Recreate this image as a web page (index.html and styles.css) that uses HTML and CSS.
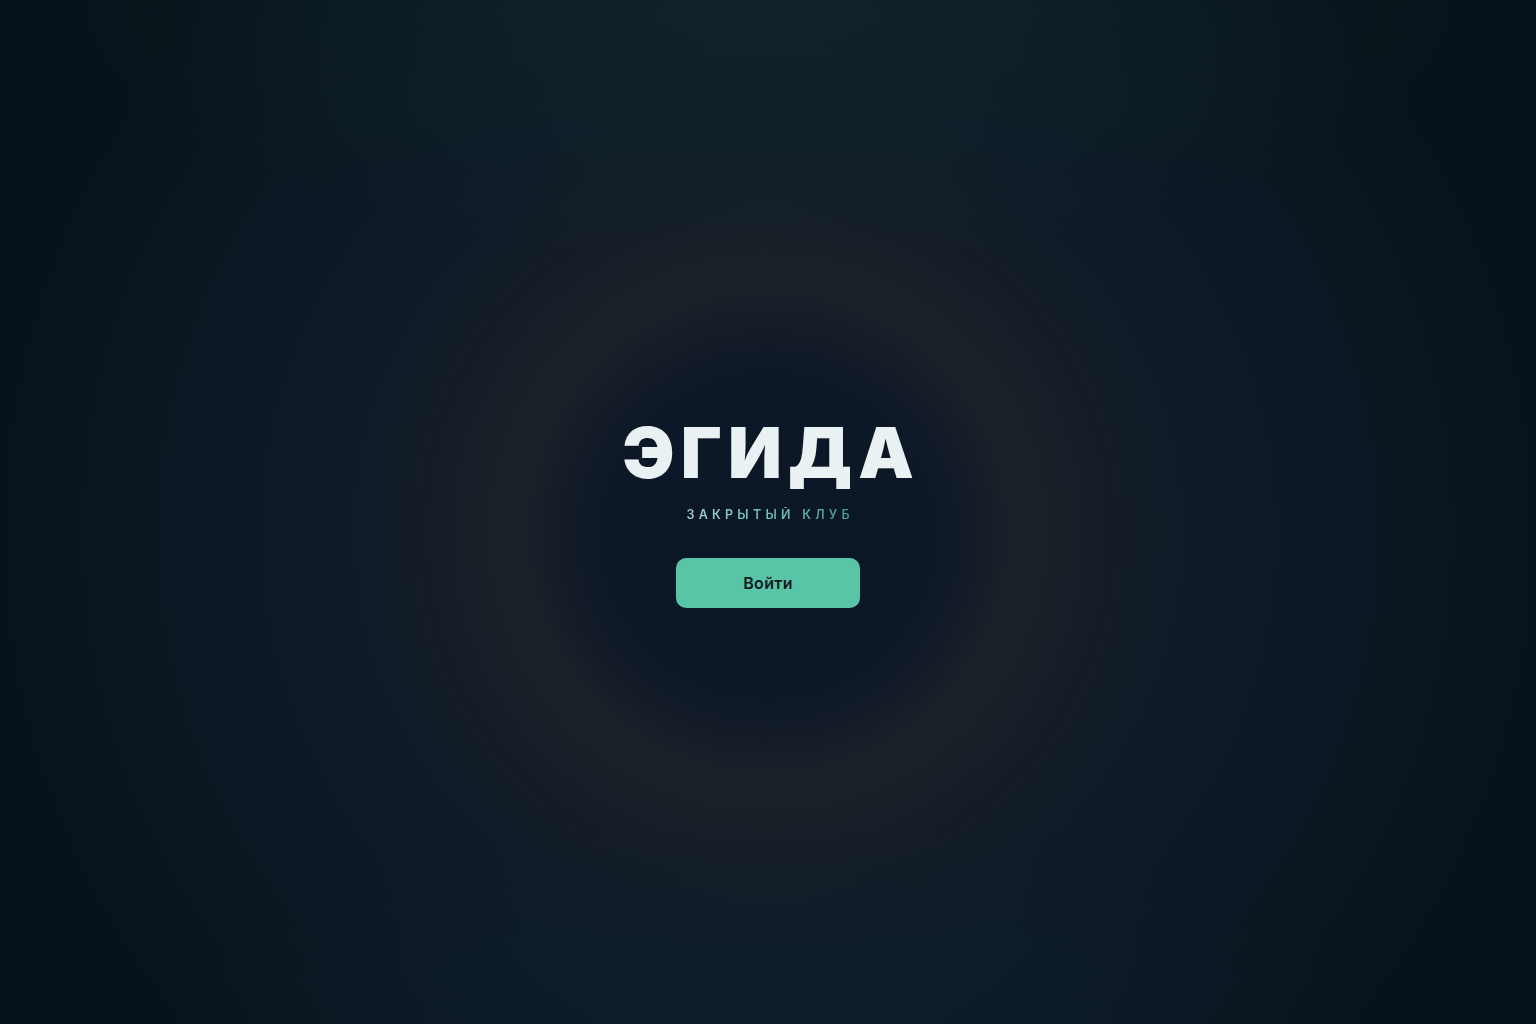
FILE: index.html
```html
<!DOCTYPE html>
<html lang="ru">
<head>
<meta charset="utf-8">
<title>Эгида</title>
<link rel="stylesheet" href="styles.css">
</head>
<body>
<main class="page">
  <section class="hero">
    <h1 class="title">ЭГИДА</h1>
    <p class="subtitle">ЗАКРЫТЫЙ КЛУБ</p>
    <button class="enter" type="button">Войти</button>
  </section>
</main>
</body>
</html>
```
FILE: styles.css
```css
* { box-sizing: border-box; }
html, body { margin: 0; height: 100%; }
body {
  font-family: Inter, "Noto Sans", "DejaVu Sans", sans-serif;
  background-color: #0a141e;
}
.page {
  min-height: 100vh;
  display: flex;
  align-items: center;
  justify-content: center;
  background:
    radial-gradient(ellipse 230px 210px at 50% 53%, rgba(11,22,38,0.9) 0%, rgba(11,22,38,0.6) 60%, rgba(11,22,38,0) 100%),
    radial-gradient(circle at 50% 52%, #0c1727 0px, #0d1828 150px, #171d28 215px, #1c2229 250px, #141d27 340px, #0e1a28 450px, #0b1722 600px, #08121a 780px),
    #08121a;
  position: relative;
  overflow: hidden;
}
.page::before {
  content: "";
  position: absolute;
  inset: 0;
  background:
    radial-gradient(ellipse 700px 260px at 50% 0%, rgba(18,40,42,0.75), rgba(18,40,42,0) 100%),
    radial-gradient(ellipse 600px 200px at 50% 100%, rgba(16,32,48,0.6), rgba(16,32,48,0) 100%);
  pointer-events: none;
}
.hero {
  position: relative;
  display: flex;
  flex-direction: column;
  align-items: center;
  margin-top: 2px;
}
.title {
  margin: 0;
  font-family: Inter, "Noto Sans", sans-serif;
  font-weight: 900;
  font-size: 70px;
  line-height: 1;
  letter-spacing: 0.09em;
  margin-right: -0.09em;
  color: #e9f1f3;
}
.subtitle {
  margin: 19px 0 0;
  font-size: 12.5px;
  font-weight: 600;
  letter-spacing: 0.34em;
  margin-right: -0.34em;
  background: linear-gradient(90deg, #a4d6cc 0%, #66bba4 60%, #3f9580 100%);
  -webkit-background-clip: text;
  background-clip: text;
  color: transparent;
}
.enter {
  margin-top: 36px;
  width: 184px;
  height: 50px;
  border: none;
  border-radius: 10px;
  background: #57c5a6;
  color: #0e1c1f;
  font-family: Inter, "Noto Sans", sans-serif;
  font-size: 16px;
  font-weight: 600;
  letter-spacing: 0.02em;
  cursor: pointer;
}
```
